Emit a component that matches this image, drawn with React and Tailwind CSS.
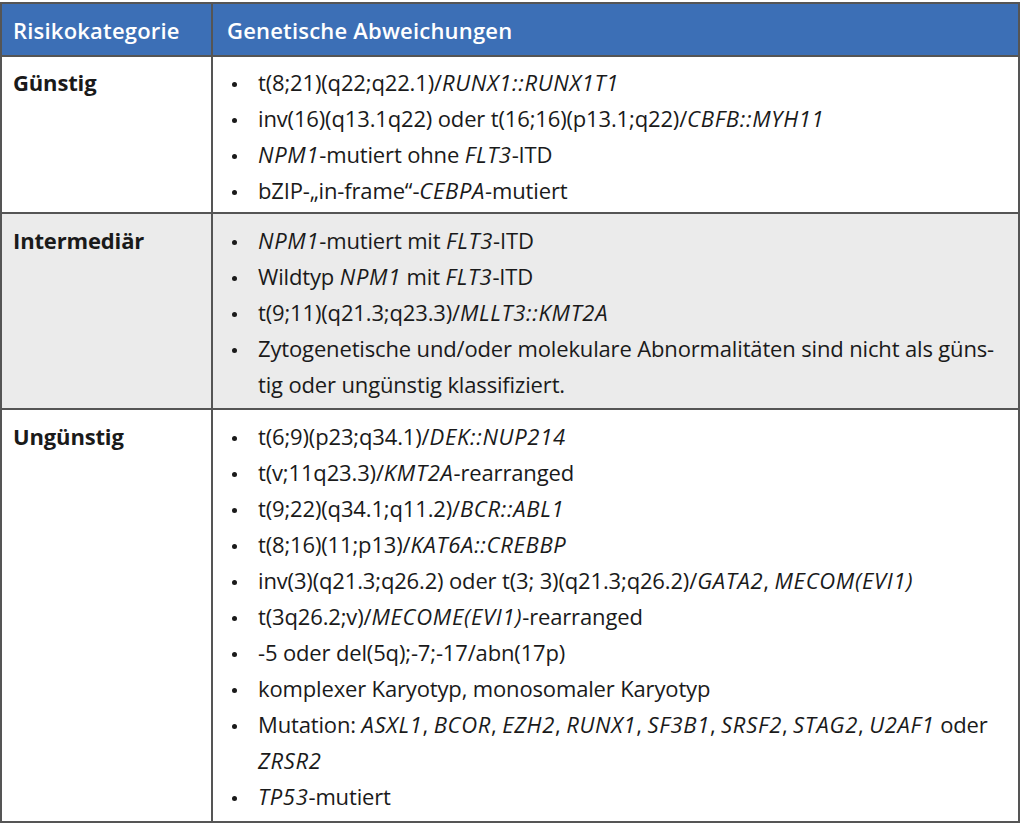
import React from "react";

const B = ({ children }) => (
  <li className="flex">
    <span className="w-[27px] shrink-0">
      <span className="block w-[5px] h-[5px] rounded-full bg-[#1a1a1a] mt-[18px] ml-[1px]"></span>
    </span>
    <span>{children}</span>
  </li>
);

const I = ({ children }) => <i className="tracking-[0.7px]">{children}</i>;

export default function App() {
  return (
    <div className="w-[1024px] h-[838px] bg-white pt-[2px]" style={{ fontFamily: "'Open Sans', 'Liberation Sans', sans-serif" }}>
      <div className="w-[1020px] border-2 border-[#555] text-[#1a1a1a] text-[22px] leading-[36px] tracking-[-0.15px]">
        <div className="grid grid-cols-[211px_1fr] bg-[#3c6fb6] text-white font-semibold text-[22px] tracking-[0.2px] border-b-2 border-[#555] h-[53px]">
          <div className="px-[11px] flex items-center border-r-2 border-[#555]">Risikokategorie</div>
          <div className="px-[14px] flex items-center">Genetische Abweichungen</div>
        </div>
        <div className="grid grid-cols-[211px_1fr] border-b-2 border-[#555]">
          <div className="px-[11px] pt-[7px] font-bold border-r-2 border-[#555]">Günstig</div>
          <ul className="pl-[18px] pt-[7px] pb-[4px]">
            <B>t(8;21)(q22;q22.1)/<I>RUNX1::RUNX1T1</I></B>
            <B>inv(16)(q13.1q22) oder t(16;16)(p13.1;q22)/<I>CBFB::MYH11</I></B>
            <B><I>NPM1</I>-mutiert ohne <I>FLT3</I>-ITD</B>
            <B>bZIP-„in-frame“-<I>CEBPA</I>-mutiert</B>
          </ul>
        </div>
        <div className="grid grid-cols-[211px_1fr] border-b-2 border-[#555] bg-[#ebebeb]">
          <div className="px-[11px] pt-[8px] font-bold border-r-2 border-[#555]">Intermediär</div>
          <ul className="pl-[18px] pt-[8px] pb-[6px]">
            <B><I>NPM1</I>-mutiert mit <I>FLT3</I>-ITD</B>
            <B>Wildtyp <I>NPM1</I> mit <I>FLT3</I>-ITD</B>
            <B>t(9;11)(q21.3;q23.3)/<I>MLLT3::KMT2A</I></B>
            <B>Zytogenetische und/oder molekulare Abnormalitäten sind nicht als güns-<br />tig oder ungünstig klassifiziert.</B>
          </ul>
        </div>
        <div className="grid grid-cols-[211px_1fr]">
          <div className="px-[11px] pt-[8px] font-bold border-r-2 border-[#555]">Ungünstig</div>
          <ul className="pl-[18px] pt-[8px] pb-[7px]">
            <B>t(6;9)(p23;q34.1)/<I>DEK::NUP214</I></B>
            <B>t(v;11q23.3)/<I>KMT2A</I>-rearranged</B>
            <B>t(9;22)(q34.1;q11.2)/<I>BCR::ABL1</I></B>
            <B>t(8;16)(11;p13)/<I>KAT6A::CREBBP</I></B>
            <B>inv(3)(q21.3;q26.2) oder t(3; 3)(q21.3;q26.2)/<I>GATA2</I>, <I>MECOM(EVI1)</I></B>
            <B>t(3q26.2;v)/<I>MECOME(EVI1)</I>-rearranged</B>
            <B>-5 oder del(5q);-7;-17/abn(17p)</B>
            <B>komplexer Karyotyp, monosomaler Karyotyp</B>
            <B>Mutation: <I>ASXL1</I>, <I>BCOR</I>, <I>EZH2</I>, <I>RUNX1</I>, <I>SF3B1</I>, <I>SRSF2</I>, <I>STAG2</I>, <I>U2AF1</I> oder<br /><I>ZRSR2</I></B>
            <B><I>TP53</I>-mutiert</B>
          </ul>
        </div>
      </div>
    </div>
  );
}
